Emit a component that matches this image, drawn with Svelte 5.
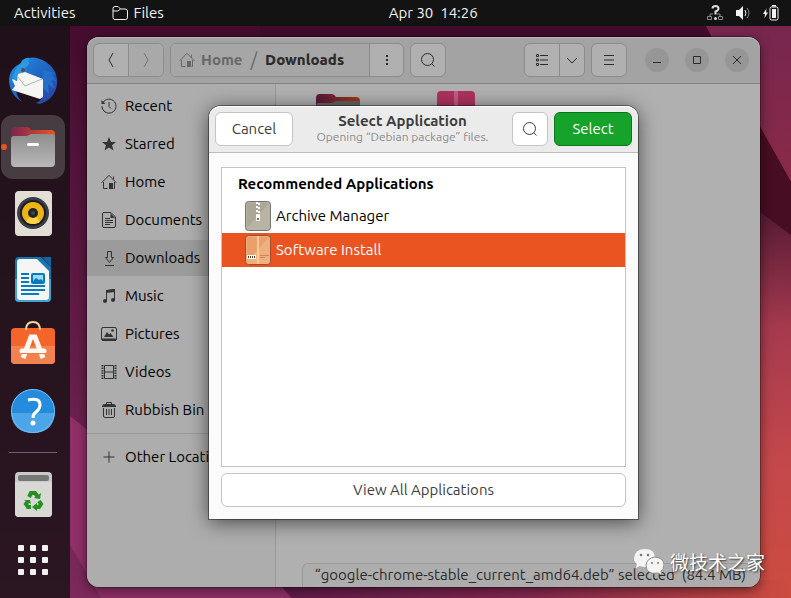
<script lang="ts">
    const places = ['Recent', 'Starred', 'Home', 'Documents', 'Downloads', 'Music', 'Pictures', 'Videos', 'Rubbish Bin'];
    const apps = ['Archive Manager', 'Software Install'];

    let place = $state('Downloads');
    let app = $state('Software Install');
    let isVisible = $state(true);

    const handleClose = () => {
        isVisible = false;
    };

    const handleKeydown = (e: KeyboardEvent) => {
        if (e.key === 'Escape') {
            handleClose();
        }
    };
</script>

<svelte:window onkeydown={handleKeydown}/>

{#snippet house()}
    <path d="M.8 8.7 8 1.3l7.2 7.4M12.5 2.5v3M2.5 8v6.5h4M13.5 8v6.5h-1"/>
    <path d="M8 9h4v6H8z" fill="currentColor" stroke="none"/>
{/snippet}

{#snippet search()}
    <svg class="icon" viewBox="0 0 16 16"><circle cx="7.5" cy="7.5" r="6"/><path d="m12 12 2.5 2.5"/></svg>
{/snippet}

{#snippet placeIcon(name)}
    <svg class="icon" viewBox="0 0 16 16">
        {#if name === 'Recent'}
            <path d="M2 4.5A7 7 0 1 1 1 8.5M8 4v4.5l2 2"/>
            <path d="M.5 2v4h4z" fill="currentColor" stroke="none"/>
            <path d="M1 8.5a7 7 0 0 0 4 6" stroke-dasharray="1 1"/>
        {:else if name === 'Starred'}
            <path d="m8 1 2 5h5l-4 3.300 1.500 5.200L8 11.400l-4.500 3.100L5 9.300 1 6h5z" fill="currentColor" stroke="none"/>
        {:else if name === 'Home'}
            {@render house()}
        {:else if name === 'Documents'}
            <path d="M3 .5h7l4.500 4.500v9q0 1.500-1.500 1.500H3q-1.500 0-1.500-1.500V2Q1.500.5 3 .5zM4 6.500h5M4 8.500h8M4 10.500h8M4 12.500h5"/>
            <path d="M9.500 1v5H14z" fill="currentColor" stroke="none"/>
        {:else if name === 'Downloads'}
            <path d="M6.500 1.500h4v6h2l-4 5-4-5h2zM4 15.500h9"/>
        {:else if name === 'Music'}
            <path d="M5.500 13V2.500l8-1V12"/>
            <path d="M5 2.200 14 1v3L5 5z" fill="currentColor" stroke="none"/>
            <circle cx="4" cy="13" r="2" fill="currentColor" stroke="none"/>
            <circle cx="12" cy="12" r="2" fill="currentColor" stroke="none"/>
        {:else if name === 'Pictures'}
            <rect x=".5" y="1.500" width="15" height="13" rx="1.500"/>
            <path d="m3 11 3-5 2 2.500L9.500 7l3 4zM1 12.500h14v2H1z" fill="currentColor" stroke="none"/>
            <circle cx="11.500" cy="4.500" r="1.300" fill="currentColor" stroke="none"/>
        {:else if name === 'Videos'}
            <path d="M3.500 1.500h9v13h-9zM3.500 8h9"/>
            <path d="M1.500 1v14M14.500 1v14" stroke-width="2" stroke-dasharray="1.500 1"/>
        {:else if name === 'Rubbish Bin'}
            <path d="M2.500 6v8q0 1.500 1.500 1.500h8q1.500 0 1.500-1.500V6M5.500 7v6M8 7v6M10.500 7v6M5.500 2.500v-2h5v2"/>
            <path d="M1 5q0-3 3-3h8q3 0 3 3z" fill="currentColor" stroke="none"/>
        {:else}
            <path d="M8 2.500v11M2.500 8h11"/>
        {/if}
    </svg>
{/snippet}

{#snippet folder()}
    <svg class="folder" viewBox="0 0 46 42">
        <path d="M1 5q0-4 4-4h12q2 0 4 3h20q4 0 4 4v14H1z" fill="url(#folder-back)"/>
        <path d="M1 13q0-3 3-3h13l4-2h21q3 0 3 3v26q0 4-4 4H5q-4 0-4-4z" fill="url(#folder-front)"/>
        <rect x="17" y="17" width="12" height="3" rx="1.500" fill="#fff"/>
    </svg>
{/snippet}

<div class="screen">
    <svg class="wallpaper" viewBox="0 0 791 598" preserveAspectRatio="none" aria-hidden="true">
        <defs>
            <linearGradient id="wall-left" x1="0" y1="0" x2="0" y2="1">
                <stop offset="0" stop-color="#430b2d"/>
                <stop offset="1" stop-color="#7d2a5c"/>
            </linearGradient>
            <linearGradient id="wall-right" gradientUnits="userSpaceOnUse" x1="760" y1="212" x2="791" y2="598">
                <stop offset="0" stop-color="#551a34"/>
                <stop offset=".3" stop-color="#a53a4e"/>
                <stop offset=".65" stop-color="#c4484b"/>
                <stop offset="1" stop-color="#cd4c40"/>
            </linearGradient>
            <linearGradient id="wall-bottom" gradientUnits="userSpaceOnUse" x1="285" y1="0" x2="791" y2="0">
                <stop offset="0" stop-color="#611b49"/>
                <stop offset=".5" stop-color="#85294f"/>
                <stop offset="1" stop-color="#cd4c40"/>
            </linearGradient>
            <linearGradient id="wall-top" x1="0" y1="0" x2="0" y2="1">
                <stop offset="0" stop-color="#76264f"/>
                <stop offset="1" stop-color="#8a2a48"/>
            </linearGradient>
            <linearGradient id="folder-back">
                <stop offset="0" stop-color="#7c2355"/>
                <stop offset="1" stop-color="#e95420"/>
            </linearGradient>
            <linearGradient id="folder-front" x1="0" y1="0" x2="0" y2="1">
                <stop offset="0" stop-color="#8e8e8e"/>
                <stop offset="1" stop-color="#b8b8b8"/>
            </linearGradient>
        </defs>
        <path d="M0 0h791v598H0z" fill="url(#wall-left)"/>
        <path d="M260 0h531v300H260z" fill="#430c2d"/>
        <path d="M700 15h91v167L760 127z" fill="url(#wall-top)"/>
        <path d="m760 127 31 55v53l-31-23z" fill="#470d22"/>
        <path d="m700 168 60 44 31 23v363H700z" fill="url(#wall-right)"/>
        <path d="M70 416 285 587l5 11H101L70 545z" fill="#8f3068"/>
        <path d="M275 580h516v18H292z" fill="url(#wall-bottom)"/>
    </svg>

    <header class="topbar">
        <button class="bar-item">Activities</button>
        <button class="bar-item files">
            <svg class="icon" viewBox="0 0 16 16"><path d="M1 3.500Q1 1.500 3 1.500h3l2.500 2.500H13q2.500 0 2.500 2v6.500q0 2-2 2H3q-2 0-2-2zM1 6h5l2.500-2"/></svg>
            Files
        </button>
        <button class="bar-item clock">Apr 30&nbsp; 14:26</button>
        <button class="bar-item status" aria-label="System menu">
            <svg class="icon" viewBox="0 0 16 16">
                <path d="M3 11V9h3M13 11V9h-3M.5 11.500h4v3h-4zM11.500 11.500h4v3h-4z" stroke="#888"/>
                <path d="M5.500 3.500q0-2.500 3-2.500t3 2.500q0 2-3 3v3" stroke="#ddd" stroke-width="2"/>
                <circle cx="8.500" cy="13.500" r="1.500" fill="#ddd" stroke="none"/>
            </svg>
            <svg class="icon" viewBox="0 0 16 16">
                <path d="M1 5h3l4-4v14l-4-4H1z" fill="currentColor" stroke="none"/>
                <path d="M10 5q2 3 0 6"/><path d="M12 3q4 5 0 10" opacity=".5"/>
            </svg>
            <svg class="icon" viewBox="0 0 16 16">
                <path d="M3.500 3.500 0 9h2l-.5 4L5 7.500H3z" fill="currentColor" stroke="none"/>
                <rect x="7" y="2" width="8" height="13" rx="1.500"/><path d="M9 4h4v9H9zM9 0h4v1.500H9z" fill="currentColor" stroke="none"/>
            </svg>
        </button>
    </header>

    <div class="workspace">
        <nav class="dock" aria-label="Dock">
            <button class="launcher" aria-label="Thunderbird">
                <svg viewBox="0 0 48 48">
                    <defs>
                        <linearGradient id="bird" x1="0" y1="0" x2="1" y2="1">
                            <stop offset="0" stop-color="#2b8de0"/>
                            <stop offset=".6" stop-color="#1b5fbe"/>
                            <stop offset="1" stop-color="#343a9c"/>
                        </linearGradient>
                    </defs>
                    <path d="M13 3Q25-3 37 5q12 8 11 22-2 15-17 20l-4-1q5-2 7-7L7 32l1 6q2 4 5 7Q0 37 0 22 1 11 12 6z" fill="url(#bird)"/>
                    <path d="M12 6q4-6 9-5l-2 3q3 2-2 6l-8 11-6 5q0-12 9-20z" fill="#2b9ae3"/>
                    <path d="m34 13 13 3-5 1 6 8-6-3 4 10-7-5 1 10-6-6z" fill="#2470c8"/>
                    <path d="m9 17 7-2 18 7v18l-3 2-28-9 3-4-3-7 5 2z" fill="#f5f5f3"/>
                    <path d="m8 19 8 10 17-7" fill="none" stroke="#b9b5ac"/>
                    <circle cx="14" cy="13" r="2" fill="#5b4a56"/>
                </svg>
            </button>
            <button class="launcher active" aria-label="Files">{@render folder()}</button>
            <button class="launcher" aria-label="Rhythmbox">
                <svg viewBox="0 0 48 48">
                    <rect x="6" y="2" width="37" height="45" rx="4" fill="#e2ddd5"/>
                    <circle cx="24" cy="24" r="16" fill="#3b3d45"/>
                    <circle cx="24" cy="24" r="13" fill="#191b22"/>
                    <circle cx="24" cy="24" r="11" fill="#edb514"/>
                    <path d="m24 24-7 9q7 4 14 0z" fill="#ffd449"/>
                    <circle cx="24" cy="24" r="5" fill="#222429"/>
                    <circle cx="24" cy="24" r="2" fill="#41444a"/>
                </svg>
            </button>
            <button class="launcher" aria-label="LibreOffice Writer">
                <svg viewBox="0 0 48 48">
                    <path d="M10 2h22l10 10v31q0 4-4 4H10q-4 0-4-4V6q0-4 4-4z" fill="#1776b1"/>
                    <path d="M6 24h36v19q0 4-4 4H10q-4 0-4-4z" fill="#3da4d4"/>
                    <path d="M33 2h9v10z" fill="#1166a0"/>
                    <path d="M11 4h17l12 12v26q0 3-3 3H11q-3 0-3-3V7q0-3 3-3z" fill="#f5f5f4"/>
                    <path d="M12 19h8M12 23h8M12 27h8M12 31h24M12 35h24M12 39h18" stroke="#087bbc" stroke-width="2"/>
                    <rect x="23" y="19" width="12" height="9" rx="1" fill="#9cdaf5" stroke="#087bbc" stroke-width="2"/>
                    <path d="m23 27 4-4 3 2 2-1 3 3z" fill="#087bbc"/>
                </svg>
            </button>
            <button class="launcher" aria-label="Ubuntu Software">
                <svg viewBox="0 0 48 48">
                    <rect x="2" y="7" width="44" height="36" rx="4" fill="#f4652b"/>
                    <path d="M2 25h44v14q0 4-4 4H6q-4 0-4-4z" fill="#f28351"/>
                    <path d="M17 9q0-8 7-8t7 8" fill="none" stroke="#f8d39b" stroke-width="2"/>
                    <path d="M14 37 22 16h4l8 21" fill="none" stroke="#fff8ef" stroke-width="5"/>
                    <path d="M13 30h22" stroke="#fff8ef" stroke-width="5" stroke-linecap="round"/>
                    <path d="M12 32.500h24" stroke="#ef7b49"/>
                </svg>
            </button>
            <button class="launcher" aria-label="Help">
                <svg viewBox="0 0 48 48">
                    <circle cx="24" cy="24" r="22" fill="#258bdc"/>
                    <path d="M2 26h44q-2 20-22 20T2 26z" fill="#4ca5e6"/>
                    <circle cx="24" cy="24" r="21.500" fill="none" stroke="#73baf0"/>
                    <path d="M19 13q12-3 12 5 0 4-4 7-3 2-3 6" fill="none" stroke="#fff" stroke-width="3"/>
                    <circle cx="24" cy="36" r="2.500" fill="#fff"/>
                </svg>
            </button>
            <hr>
            <button class="launcher" aria-label="Rubbish Bin">
                <svg viewBox="0 0 48 48">
                    <rect x="6" y="2" width="37" height="45" rx="4" fill="#c9c9c7"/>
                    <path d="M6 12h37v31q0 4-4 4H10q-4 0-4-4z" fill="#d8d8d5"/>
                    <rect x="9" y="5" width="31" height="6" rx="2" fill="#777"/>
                    <g fill="none" stroke="#24901f" stroke-width="4">
                        <path d="m20 27 2-4h4l3 4"/>
                        <path d="m30 31 2 3-2 3h-3"/>
                        <path d="M22 37h-3l-2-3 2-3"/>
                    </g>
                    <path d="m25 28 6 1 1-6zM28 33v8l-5-4zM15 30h6l1 4z" fill="#24901f"/>
                </svg>
            </button>
            <button class="launcher" aria-label="Show Applications">
                <svg viewBox="0 0 48 48" fill="#f2f0f1">
                    {#each [9, 21, 33] as y}
                        {#each [9, 21, 33] as x}
                            <rect {x} {y} width="6" height="6" rx="1"/>
                        {/each}
                    {/each}
                </svg>
            </button>
        </nav>

        <main class="desktop">
            <section class="window">
                <div class="window-bar">
                    <div class="linked">
                        <button class="narrow" aria-label="Back"><svg class="icon" viewBox="0 0 16 16"><path d="M10 1 6 8l4 7"/></svg></button>
                        <button class="narrow" aria-label="Forward" disabled><svg class="icon" viewBox="0 0 16 16"><path d="m6 1 4 7-4 7"/></svg></button>
                    </div>
                    <div class="linked path">
                        <button class="crumbs">
                            <svg class="icon" viewBox="0 0 16 16">{@render house()}</svg>
                            <span>Home</span>
                            <i>/</i>
                            <b>Downloads</b>
                        </button>
                        <button class="narrow" aria-label="Path menu"><svg class="icon" viewBox="0 0 16 16"><path d="M8 3v2M8 7v2M8 11v2" stroke-width="2"/></svg></button>
                    </div>
                    <div class="linked"><button class="narrow" aria-label="Search">{@render search()}</button></div>
                    <div class="linked view">
                        <button class="narrow" aria-label="List view">
                            <svg class="icon" viewBox="0 0 16 16"><path d="M2.500 2.500h2v2h-2zM2.500 7h2v2h-2zM2.500 11.500h2v2h-2zM6 3.500h8M6 8h8M6 12.500h8"/></svg>
                        </button>
                        <button class="tiny" aria-label="View options"><svg class="icon" viewBox="0 0 16 16"><path d="m3 6 5 5 5-5"/></svg></button>
                    </div>
                    <div class="linked"><button class="narrow" aria-label="Menu"><svg class="icon" viewBox="0 0 16 16"><path d="M3 3.500h10M3 8h10M3 12.500h10"/></svg></button></div>
                    <div class="controls">
                        <button aria-label="Minimise"><svg class="icon" viewBox="0 0 16 16"><path d="M4 10.500h8"/></svg></button>
                        <button aria-label="Maximise"><svg class="icon" viewBox="0 0 16 16"><path d="M4.500 4.500h7v7h-7z"/></svg></button>
                        <button aria-label="Close"><svg class="icon" viewBox="0 0 16 16"><path d="m4 4 8 8M12 4l-8 8"/></svg></button>
                    </div>
                </div>
                <div class="window-body">
                    <nav class="sidebar" aria-label="Places">
                        {#each places as name}
                            <button class="place" class:current={name === place} onclick={() => place = name}>
                                {@render placeIcon(name)}{name}
                            </button>
                        {/each}
                        <hr>
                        <button class="place">{@render placeIcon('Other')}Other Locations</button>
                    </nav>
                    <div class="files-view">
                        {@render folder()}
                        <svg class="package" viewBox="0 0 38 44">
                            <rect width="38" height="44" rx="4" fill="#ae3260"/>
                            <path d="M17 0h4v44h-4z" fill="#c65c80"/>
                        </svg>
                        <div class="status-line">“google-chrome-stable_current_amd64.deb” selected&nbsp; (84.4 MB)</div>
                    </div>
                </div>

                {#if isVisible}
                    <div class="modal-layer">
                        <div class="modal" role="dialog" aria-labelledby="modal-title">
                            <div class="modal-bar">
                                <button class="btn short" onclick={handleClose}>Cancel</button>
                                <div class="modal-heading">
                                    <div class="title" id="modal-title">Select Application</div>
                                    <div class="subtitle">Opening “Debian package” files.</div>
                                </div>
                                <button class="btn square" aria-label="Search">{@render search()}</button>
                                <button class="btn short select-btn" onclick={handleClose}>Select</button>
                            </div>
                            <div class="modal-body">
                                <div class="app-list">
                                    <div class="list-title">Recommended Applications</div>
                                    {#each apps as name, i}
                                        <button class="app" class:selected={name === app} onclick={() => app = name}>
                                            <svg class="app-icon" viewBox="0 0 26 30">
                                                {#if i === 0}
                                                    <rect x=".5" y=".5" width="25" height="29" rx="3" fill="#b9b3a6" stroke="#77736c"/>
                                                    <path d="M2 27V2h22z" fill="#aaa797"/>
                                                    <path d="M12 1v12M14 2v11" stroke="#fff" stroke-width="2" stroke-dasharray="2 2"/>
                                                    <rect x="11" y="13" width="4" height="7" rx="1" fill="#fff"/>
                                                    <path d="M12 17h2v2h-2z" fill="#77736c"/>
                                                {:else}
                                                    <rect x=".5" y=".5" width="25" height="29" rx="3" fill="#efb081" stroke="#9c4f28"/>
                                                    <path d="M2 27V2h22z" fill="#eba06c"/>
                                                    <path d="M12 1h2v28h-2z" fill="#f5cc91"/>
                                                    <path d="M2 20h9v4H2z" fill="#fff"/>
                                                    <path d="M3 22h7" stroke="#4a3a32" stroke-width="2" stroke-dasharray="1 1"/>
                                                    <path d="M15 20.500h9M15 22.500h5" stroke="#df7e4c"/>
                                                {/if}
                                            </svg>
                                            {name}
                                        </button>
                                    {/each}
                                </div>
                                <button class="btn">View All Applications</button>
                            </div>
                        </div>
                    </div>
                {/if}
            </section>
        </main>
    </div>

    <div class="watermark">
        <svg viewBox="0 0 30 26" aria-hidden="true">
            <path d="M11 0q10 0 10 9 0 8-10 9-3 0-5-1l-4 2 1-4q-3-2-3-6Q1 0 11 0z" fill="#f4f4f4"/>
            <path d="M21 8q9 1 9 8 0 4-3 6l1 4-4-2q-12 2-12-8 1-7 9-8z" fill="#f4f4f4" stroke="#8d8d8d"/>
            <g fill="#777"><circle cx="7" cy="6" r="1.300"/><circle cx="14" cy="6" r="1.300"/><circle cx="18" cy="14" r="1"/><circle cx="24" cy="14" r="1"/></g>
        </svg>
        微技术之家
    </div>
</div>

<style>
    :global(body) {
        margin: 0;
    }

    .screen {
        position: relative;
        display: flex;
        flex-direction: column;
        min-height: 100vh;
        overflow: hidden;
        background: #430c2d;
        color: #000;
        font: 15px/20px Ubuntu, "Noto Sans", "Open Sans", sans-serif;
    }

    .screen * {
        box-sizing: border-box;
    }

    button {
        margin: 0;
        padding: 0;
        border: 0;
        background: none;
        color: inherit;
        font: inherit;
    }

    svg {
        display: block;
        flex: none;
    }

    .icon {
        width: 16px;
        height: 16px;
        fill: none;
        stroke: currentColor;
    }

    .wallpaper {
        position: absolute;
        width: 100%;
        height: 100%;
    }

    .topbar {
        position: relative;
        display: grid;
        grid-template-columns: auto 1fr auto 1fr;
        align-items: center;
        height: 26px;
        padding: 0 12px 0 14px;
        background: #131313;
        color: #f2f2f2;
    }

    .bar-item {
        display: flex;
        align-items: center;
        gap: 6px;
    }

    .files {
        margin-left: 36px;
    }

    .clock {
        margin-left: 12px;
    }

    .status {
        justify-self: end;
        gap: 12px;
    }

    .workspace {
        position: relative;
        display: flex;
        flex: 1;
    }

    .dock {
        display: flex;
        flex-direction: column;
        align-items: center;
        width: 66px;
        padding: 22px 0 4px;
        border-right: 4px solid transparent;
        box-sizing: content-box;
        background: rgba(22, 17, 20, .8);
    }

    .launcher {
        position: relative;
        display: grid;
        place-items: center;
        width: 64px;
        height: 64px;
        margin: 1px 0;
        border-radius: 12px;
    }

    .launcher svg {
        width: 48px;
        height: 48px;
    }

    .launcher .folder {
        width: 46px;
        height: 42px;
    }

    .launcher.active {
        background: #483c43;
    }

    .launcher.active::before {
        content: "";
        position: absolute;
        left: 0;
        width: 6px;
        height: 6px;
        border-radius: 50%;
        background: #e95420;
    }

    .dock hr {
        width: 48px;
        margin: 8px 0;
        border: 0;
        border-top: 1px solid #6a6066;
    }

    .desktop {
        display: flex;
        flex: 1;
        min-width: 0;
        padding: 11px 31px 11px 17px;
    }

    .window {
        position: relative;
        display: flex;
        flex: 1;
        flex-direction: column;
        min-width: 0;
        border-radius: 12px;
        background: #b0b0b0;
        box-shadow: 0 0 0 1px rgba(0, 0, 0, .25), 0 3px 12px rgba(0, 0, 0, .5);
    }

    .window-bar {
        display: flex;
        align-items: center;
        gap: 6px;
        height: 47px;
        padding: 0 11px 0 6px;
        border-bottom: 1px solid #828282;
        border-radius: 12px 12px 0 0;
        background: #a3a3a3;
        box-shadow: inset 0 1px #b5b5b5;
        color: #2b2b2b;
    }

    .linked {
        display: flex;
        overflow: hidden;
        height: 34px;
        border: 1px solid #8b8b8b;
        border-radius: 6px;
        background: #b0b0b0;
    }

    .linked button {
        display: grid;
        place-items: center;
    }

    .linked button + button {
        border-left: 1px solid #8b8b8b;
    }

    .linked .narrow {
        width: 34px;
    }

    .linked .narrow:disabled {
        width: 35px;
        background: #a9a9a9;
        color: #747474;
    }

    .linked .tiny {
        width: 25px;
    }

    .linked .crumbs {
        display: flex;
        align-items: center;
        gap: 8px;
        width: 198px;
        padding: 0 8px;
        background: #a6a6a6;
        color: #666;
        font-weight: bold;
    }

    .crumbs span {
        margin-left: -2px;
    }

    .crumbs i {
        font-size: 18px;
        font-style: normal;
        font-weight: normal;
    }

    .crumbs b {
        color: #2b2b2b;
    }

    .view {
        margin-left: auto;
    }

    .controls {
        display: flex;
        gap: 16px;
        margin-left: 12px;
    }

    .controls button {
        display: grid;
        place-items: center;
        width: 24px;
        height: 24px;
        border-radius: 50%;
        background: #969696;
    }

    .window-body {
        display: flex;
        flex: 1;
    }

    .sidebar {
        width: 189px;
        padding-top: 4px;
        border-right: 1px solid #999;
        border-radius: 0 0 0 12px;
        background: #adadad;
    }

    .place {
        display: flex;
        align-items: center;
        gap: 8px;
        width: 100%;
        height: 36px;
        margin-bottom: 2px;
        padding-left: 14px;
    }

    .place .icon {
        color: #333;
    }

    .place.current {
        background: #9b9b9b;
    }

    .sidebar hr {
        margin: 5px 0;
        border: 0;
        border-top: 1px solid #999;
    }

    .files-view {
        position: relative;
        display: flex;
        flex: 1;
        gap: 76px;
        padding: 7px 0 0 39px;
    }

    .files-view .folder {
        width: 46px;
        height: 42px;
        margin-top: 2px;
        filter: brightness(.7);
    }

    .package {
        width: 38px;
        height: 44px;
    }

    .status-line {
        position: absolute;
        right: 0;
        bottom: 0;
        padding: 1px 14px 2px 12px;
        border: 1px solid #999;
        border-width: 1px 0 0 1px;
        border-radius: 6px 0 12px 0;
        background: #adadad;
        color: #2b2b2b;
        white-space: nowrap;
    }

    .modal-layer {
        position: absolute;
        inset: 0;
        display: grid;
        place-items: center;
    }

    .modal {
        width: 429px;
        max-width: 100%;
        border-radius: 12px 12px 0 0;
        background: #fafbfa;
        box-shadow: 0 0 0 1px rgba(0, 0, 0, .4), 0 3px 20px rgba(0, 0, 0, .6);
    }

    .modal-bar {
        display: flex;
        align-items: center;
        gap: 6px;
        height: 47px;
        padding: 0 6px;
        border-bottom: 1px solid #bdbdbd;
        border-radius: 12px 12px 0 0;
        background: #ebebeb;
        box-shadow: inset 0 1px #fff;
    }

    .modal-heading {
        flex: 1;
        color: #3d3d3d;
        text-align: center;
    }

    .title {
        font-weight: bold;
        line-height: 16px;
    }

    .subtitle {
        color: #8b8b8b;
        font-size: 12px;
        line-height: 16px;
    }

    .btn {
        height: 34px;
        border: 1px solid #c4c4c4;
        border-radius: 6px;
        background: #fff;
        color: #3d3d3d;
    }

    .short {
        width: 78px;
    }

    .square {
        display: grid;
        place-items: center;
        width: 36px;
    }

    .select-btn {
        border-color: #0c741c;
        background: #15a32b;
        color: #fff;
    }

    .modal-body {
        display: flex;
        flex-direction: column;
        gap: 6px;
        padding: 14px 12px 12px;
    }

    .app-list {
        height: 300px;
        border: 1px solid #c4c4c4;
        background: #fff;
    }

    .list-title {
        padding: 6px 16px 5px;
        font-weight: bold;
    }

    .app {
        display: flex;
        align-items: center;
        gap: 5px;
        width: 100%;
        height: 34px;
        padding-left: 23px;
    }

    .app-icon {
        width: 26px;
        height: 30px;
    }

    .app.selected {
        background: #e95420;
        color: #fff;
    }

    .watermark {
        position: absolute;
        right: 26px;
        bottom: 22px;
        display: flex;
        align-items: center;
        gap: 6px;
        color: #fff;
        font: 19px/28px "Noto Sans CJK SC", sans-serif;
        text-shadow: 1px 1px 2px #333;
    }

    .watermark svg {
        width: 30px;
        height: 26px;
    }
</style>
